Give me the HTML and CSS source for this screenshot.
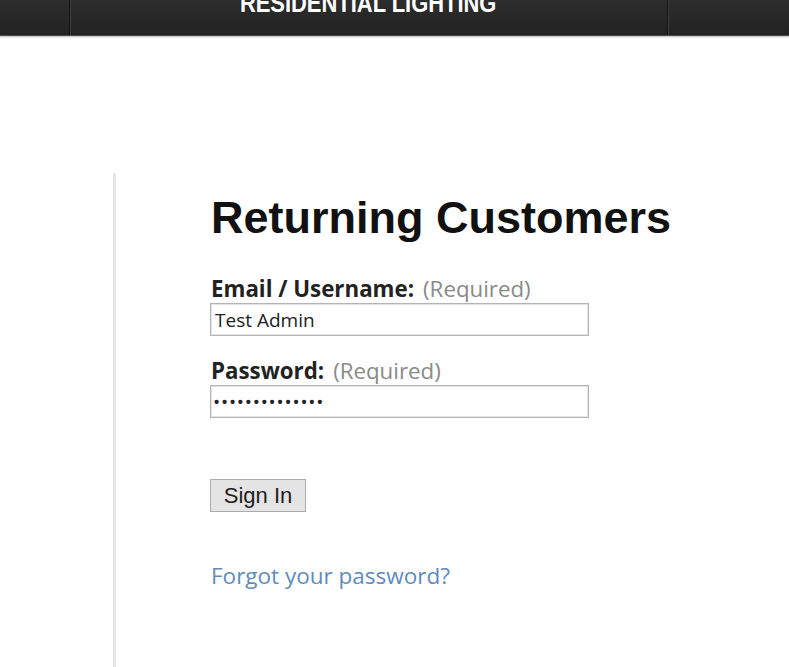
FILE: index.html
```html
<!DOCTYPE html>
<html lang="en">
<head>
<meta charset="utf-8">
<title>Returning Customers</title>
<link rel="stylesheet" href="styles.css">
</head>
<body>
<header class="topbar">
  <div class="topbar-cell topbar-left"></div>
  <div class="topbar-cell topbar-center"><span class="topbar-title">RESIDENTIAL LIGHTING</span></div>
  <div class="topbar-cell topbar-right"></div>
</header>
<main class="page">
  <section class="login">
    <h1 class="login-title">Returning Customers</h1>
    <form class="login-form" onsubmit="return false">
      <label class="field-label" for="user"><b>Email / Username:</b><span class="req">(Required)</span></label>
      <input class="field-input" id="user" type="text" value="Test Admin">
      <label class="field-label field-label-pw" for="pw"><b>Password:</b><span class="req">(Required)</span></label>
      <input class="field-input field-input-pw" id="pw" type="password" value="abcdefghijklmn">
      <button class="signin" type="submit">Sign In</button>
      <a class="forgot" href="#">Forgot your password?</a>
    </form>
  </section>
</main>
</body>
</html>
```

FILE: styles.css
```css
html, body {
  margin: 0;
  padding: 0;
  background: #ffffff;
}

body {
  font-family: "Open Sans", "Liberation Sans", sans-serif;
  color: #222;
  overflow: hidden;
}

.topbar {
  display: flex;
  height: 35px;
  background: linear-gradient(#2d2d2d, #222222);
  border-bottom: 1px solid #4a4a4a;
  box-shadow: 0 1px 0 #c9c9c9, 0 2px 2px #e8e8e8;
  overflow: hidden;
}

.topbar-left {
  width: 69px;
  border-right: 1px solid #151515;
  box-shadow: 1px 0 0 #3c3c3c;
}

.topbar-center {
  width: 597px;
  display: flex;
  justify-content: center;
  align-items: flex-start;
  border-right: 1px solid #151515;
  box-shadow: 1px 0 0 #3c3c3c;
}

.topbar-right {
  flex: 1;
}

.topbar-title {
  margin-top: -10px;
  font-family: "Liberation Sans", Arial, sans-serif;
  font-weight: bold;
  font-size: 26px;
  line-height: 26px;
  color: #ffffff;
  white-space: nowrap;
  transform: scaleX(0.843);
}

.page {
  padding-top: 137px;
}

.login {
  margin-left: 113px;
  border-left: 3px solid #e6e6e6;
  padding-left: 95px;
  min-height: 600px;
}

.login-title {
  margin: 0;
  padding-top: 20px;
  font-family: "Liberation Sans", Arial, sans-serif;
  font-weight: bold;
  font-size: 45px;
  line-height: 50px;
  color: #111;
}

.login-form {
  display: flex;
  flex-direction: column;
  align-items: flex-start;
  padding-top: 33px;
}

.field-label {
  font-size: 22.3px;
  line-height: 26px;
  color: #222;
  margin-bottom: 1px;
  white-space: nowrap;
}

.field-label b {
  font-weight: 700;
}

.field-label-pw {
  margin-top: 22px;
}

.req {
  margin-left: 9px;
  color: #8a8a8a;
  font-weight: 400;
}

.field-input {
  box-sizing: border-box;
  width: 379px;
  height: 33px;
  margin: 0 0 0 -1px;
  padding: 0 4px;
  border: 1px solid #b4b4b4;
  box-shadow: inset 0 0 0 1px #e4e4e4;
  font-family: "Open Sans", sans-serif;
  font-size: 19px;
  color: #222;
  background: #fff;
  outline: none;
}

.field-input-pw {
  padding-left: 2px;
  letter-spacing: 0.8px;
}

.signin {
  margin: 61px 0 0 -1px;
  width: 96px;
  height: 33px;
  padding: 0;
  border: 1px solid #ababab;
  background: #e4e4e4;
  font-family: "Liberation Sans", Arial, sans-serif;
  font-size: 22px;
  color: #222;
}

.forgot {
  margin-top: 51px;
  font-size: 22.5px;
  line-height: 26px;
  color: #5f8bbd;
  text-decoration: none;
  white-space: nowrap;
}
```
